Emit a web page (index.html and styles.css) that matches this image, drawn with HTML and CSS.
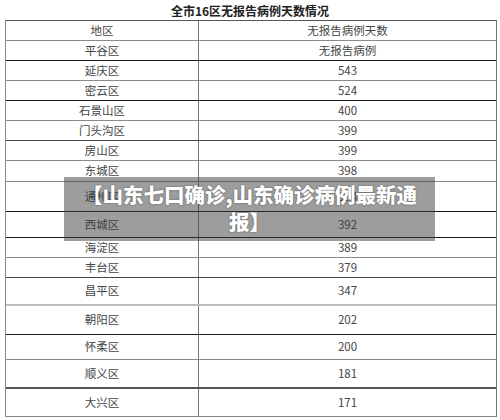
FILE: index.html
```html
<!DOCTYPE html>
<html lang="zh-CN">
<head>
<meta charset="utf-8">
<title>全市16区无报告病例天数情况</title>
<link rel="stylesheet" href="styles.css">
</head>
<body>
<div class="page">
  <h1 class="title">全市16区无报告病例天数情况</h1>
  <div class="table">
    <div class="row h20 b-gray"><div class="cell">地区</div><div class="cell">无报告病例天数</div></div>
    <div class="row h20 b-black"><div class="cell">平谷区</div><div class="cell">无报告病例</div></div>
    <div class="row h20 b-gray"><div class="cell">延庆区</div><div class="cell">543</div></div>
    <div class="row h20 b-black"><div class="cell">密云区</div><div class="cell">524</div></div>
    <div class="row h20 b-gray"><div class="cell">石景山区</div><div class="cell">400</div></div>
    <div class="row h20 b-dark"><div class="cell">门头沟区</div><div class="cell">399</div></div>
    <div class="row h20 b-gray"><div class="cell">房山区</div><div class="cell">399</div></div>
    <div class="row h21 b-gray"><div class="cell">东城区</div><div class="cell">398</div></div>
    <div class="row h30 b-black"><div class="cell">通州区</div><div class="cell">394</div></div>
    <div class="row h26 b-black"><div class="cell">西城区</div><div class="cell">392</div></div>
    <div class="row h20 b-gray"><div class="cell">海淀区</div><div class="cell">389</div></div>
    <div class="row h20 b-dark"><div class="cell">丰台区</div><div class="cell">379</div></div>
    <div class="row h28 b-light"><div class="cell">昌平区</div><div class="cell">347</div></div>
    <div class="row h29 b-black"><div class="cell">朝阳区</div><div class="cell">202</div></div>
    <div class="row h25 b-gray"><div class="cell">怀柔区</div><div class="cell">200</div></div>
    <div class="row h29 b-dark2"><div class="cell">顺义区</div><div class="cell">181</div></div>
    <div class="row h28 b-gray"><div class="cell">大兴区</div><div class="cell">171</div></div>
  </div>
  <div class="banner">【山东七口确诊,山东确诊病例最新通报】</div>
</div>
</body>
</html>
```

FILE: styles.css
```css
html, body {
  margin: 0;
  padding: 0;
  background: #ffffff;
}

.page {
  position: relative;
  width: 500px;
  height: 420px;
  overflow: hidden;
  font-family: "Noto Sans CJK SC", "Noto Sans", sans-serif;
  color: #454545;
}

.title {
  margin: 0;
  height: 20px;
  line-height: 22px;
  font-size: 12px;
  font-weight: bold;
  color: #222;
  text-align: center;
}

.table {
  margin-left: 5px;
  width: 492px;
  box-sizing: border-box;
  border-top: 1px solid #555;
  border-left: 1px solid #888;
  border-right: 1px solid #777;
}

.row {
  display: grid;
  grid-template-columns: 193px 1fr;
  box-sizing: border-box;
  border-bottom: 1px solid #888;
}

.cell {
  display: flex;
  align-items: center;
  justify-content: center;
  font-size: 11.5px;
  line-height: 1;
}

.cell:first-child {
  border-right: 1px solid #777;
}

.h20 { height: 20px; }
.h21 { height: 21px; }
.h25 { height: 25px; }
.h26 { height: 26px; }
.h28 { height: 28px; }
.h29 { height: 29px; }
.h30 { height: 30px; }

.b-gray { border-bottom-color: #8a8a8a; }
.b-black { border-bottom-color: #1a1a1a; }
.b-dark { border-bottom-color: #444; }
.b-light { border-bottom: 2px solid #bdbdbd; }
.b-dark2 { border-bottom: 2px solid #555; }

.banner {
  position: absolute;
  left: 64px;
  top: 177px;
  width: 371px;
  height: 64px;
  box-sizing: border-box;
  padding: 4px 14px 0;
  background: rgba(60, 60, 60, 0.5);
  color: #ffffff;
  font-size: 20.5px;
  font-weight: 900;
  line-height: 27px;
  text-align: center;
  text-shadow: 0 0 2px rgba(0, 0, 0, 0.45);
}
```
